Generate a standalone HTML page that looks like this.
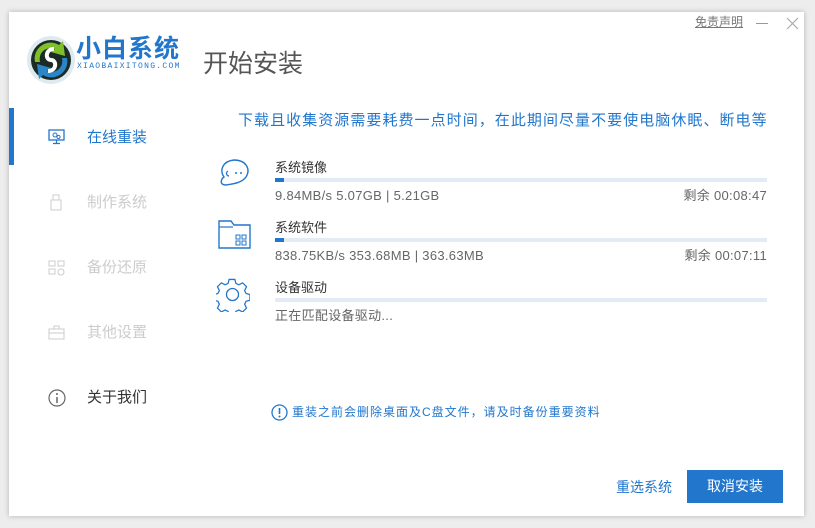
<!DOCTYPE html>
<html><head><meta charset="utf-8"><style>
body{margin:0;width:815px;height:528px;background:#ededed;position:relative;overflow:hidden;font-family:"Liberation Sans","Noto Sans CJK SC",sans-serif;}
.win{position:absolute;left:9px;top:12px;width:795px;height:504px;background:#fff;box-shadow:0 0 5px rgba(0,0,0,.25);}
.a{position:absolute;white-space:nowrap;line-height:1.2;}
.nav{position:absolute;left:78px;font-size:15px;color:#ccc;line-height:20px;}
.bar{position:absolute;left:266px;width:492px;height:4px;background:#e3ebf6;}
.bar i{position:absolute;left:0;top:0;height:4px;width:9px;background:#2277cc;}
.t{font-size:13px;color:#333;line-height:16px;}
.s{font-size:13px;color:#666;line-height:16px;letter-spacing:0.3px;}
</style></head><body>
<div class="win">
<svg class="a" style="left:16px;top:20px" width="52" height="56" viewBox="0 0 52 56">
<circle cx="26" cy="28" r="24" fill="#dfeaf0"/>
<circle cx="26" cy="28" r="20" fill="#1d2b26"/>
<path d="M10 30 A16 16 0 0 1 34 13 L38 9 L40 24 L26 20 L30 17 A11 11 0 0 0 15 30Z" fill="#7fbf2a"/>
<path d="M42 26 A16 16 0 0 1 18 43 L14 47 L12 32 L26 36 L22 39 A11 11 0 0 0 37 26Z" fill="#2a86c8"/>
<path d="M29 17 C20 17 20 28 26 28 C32 28 32 39 23 39" stroke="#fff" stroke-width="4" fill="none"/>
</svg>
<div class="a" style="left:67px;top:22px;font-size:25px;font-weight:bold;color:#2277cc;letter-spacing:1px">小白系统</div>
<div class="a" style="left:68px;top:50px;font-size:8px;color:#2277cc;letter-spacing:1.3px;font-family:'Liberation Mono',monospace">XIAOBAIXITONG.COM</div>
<div class="a" style="left:194px;top:37px;font-size:25px;color:#555">开始安装</div>
<div class="a" style="left:686px;top:3px;font-size:12px;color:#777;text-decoration:underline">免责声明</div>
<div class="a" style="left:747px;top:11px;width:12px;height:1px;background:#999"></div>
<svg class="a" style="left:777px;top:5px" width="13" height="13"><path d="M1 1L12 12M12 1L1 12" stroke="#aaa" stroke-width="1.2"/></svg>

<div class="a" style="left:0;top:96px;width:5px;height:57px;background:#2277cc"></div>
<svg class="a" style="left:39px;top:117px" width="18" height="16"><rect x="1" y="1" width="15" height="10" fill="none" stroke="#2277cc" stroke-width="1.3"/><circle cx="7" cy="6" r="2" fill="none" stroke="#2277cc"/><circle cx="10.5" cy="8" r="1.6" fill="none" stroke="#2277cc"/><path d="M8.5 11v3M5 14.5h7" stroke="#2277cc" stroke-width="1.2"/></svg>
<div class="nav" style="top:116px;color:#2277cc">在线重装</div>
<svg class="a" style="left:41px;top:182px" width="14" height="18"><rect x="3" y="1" width="6" height="5" fill="none" stroke="#ccc"/><rect x="1" y="6" width="10" height="10" fill="none" stroke="#ccc"/></svg>
<div class="nav" style="top:181px">制作系统</div>
<svg class="a" style="left:39px;top:247px" width="18" height="18"><rect x="1" y="2" width="6" height="5" fill="none" stroke="#ccc"/><rect x="10" y="2" width="6" height="5" fill="none" stroke="#ccc"/><rect x="1" y="10" width="6" height="5" fill="none" stroke="#ccc"/><circle cx="13" cy="13" r="3" fill="none" stroke="#ccc"/></svg>
<div class="nav" style="top:246px">备份还原</div>
<svg class="a" style="left:39px;top:313px" width="18" height="16"><rect x="1" y="4" width="15" height="10" fill="none" stroke="#ccc"/><rect x="6" y="1" width="5" height="3" fill="none" stroke="#ccc"/><path d="M1 8h15" stroke="#ccc"/></svg>
<div class="nav" style="top:311px">其他设置</div>
<svg class="a" style="left:39px;top:377px" width="18" height="18"><circle cx="9" cy="9" r="8" fill="none" stroke="#666" stroke-width="1.2"/><circle cx="9" cy="5" r="1" fill="#666"/><path d="M9 8v6" stroke="#666" stroke-width="1.5"/></svg>
<div class="nav" style="top:376px;color:#333">关于我们</div>

<div class="a" style="left:229px;top:100px;font-size:15px;color:#2277cc;letter-spacing:1.05px">下载且收集资源需要耗费一点时间，在此期间尽量不要使电脑休眠、断电等</div>

<svg class="a" style="left:207px;top:145px" width="38" height="34"><path d="M10 28 C3 28 5 22 8 20 C3 13 7 4 18 3 C30 3 35 12 30 20 C26 26 16 27 10 28Z" fill="none" stroke="#2277cc" stroke-width="1.4"/><path d="M12 14 C9 16 11 19 13 19" fill="none" stroke="#2277cc" stroke-width="1.2"/><circle cx="20" cy="16" r="1" fill="#2277cc"/><circle cx="25" cy="16" r="1" fill="#2277cc"/></svg>
<div class="a t" style="left:266px;top:148px">系统镜像</div>
<div class="bar" style="top:166px"><i></i></div>
<div class="a s" style="left:266px;top:176px">9.84MB/s 5.07GB | 5.21GB</div>
<div class="a s" style="right:37px;top:176px">剩余 00:08:47</div>

<svg class="a" style="left:208px;top:206px" width="36" height="32"><path d="M2 3h12l3 4h16v23H2Z" fill="none" stroke="#2277cc" stroke-width="1.4"/><path d="M2 9h14" stroke="#2277cc" stroke-width="1.2"/><g fill="none" stroke="#2277cc"><rect x="19" y="17" width="4" height="4"/><rect x="25" y="17" width="4" height="4"/><rect x="19" y="23" width="4" height="4"/><rect x="25" y="23" width="4" height="4"/></g></svg>
<div class="a t" style="left:266px;top:208px">系统软件</div>
<div class="bar" style="top:226px"><i></i></div>
<div class="a s" style="left:266px;top:236px">838.75KB/s 353.68MB | 363.63MB</div>
<div class="a s" style="right:37px;top:236px">剩余 00:07:11</div>

<svg class="a" style="left:207px;top:266px" width="34" height="34" viewBox="0 0 34 34"><path d="M14 2h6l1 4 3 1.5 4-2 4 4-2 4 1.5 3 4 1v6l-4 1-1.5 3 2 4-4 4-4-2-3 1.5-1 4h-6l-1-4-3-1.5-4 2-4-4 2-4-1.5-3-4-1v-6l4-1 1.5-3-2-4 4-4 4 2 3-1.5Z" transform="translate(-0.5 -0.5) scale(0.97)" fill="none" stroke="#2277cc" stroke-width="1.3"/><circle cx="16.5" cy="16.5" r="6" fill="none" stroke="#2277cc" stroke-width="1.3"/></svg>
<div class="a t" style="left:266px;top:268px">设备驱动</div>
<div class="bar" style="top:286px"></div>
<div class="a s" style="left:266px;top:296px">正在匹配设备驱动...</div>

<svg class="a" style="left:262px;top:392px" width="17" height="17"><circle cx="8.5" cy="8.5" r="7.5" fill="none" stroke="#2277cc" stroke-width="1.3"/><path d="M8.5 4v6" stroke="#2277cc" stroke-width="1.6"/><circle cx="8.5" cy="12.5" r="1" fill="#2277cc"/></svg>
<div class="a" style="left:283px;top:393px;font-size:12px;color:#2277cc;letter-spacing:1px">重装之前会删除桌面及C盘文件，请及时备份重要资料</div>

<div class="a" style="left:607px;top:467px;font-size:14px;color:#2277cc">重选系统</div>
<div class="a" style="left:678px;top:458px;width:96px;height:33px;background:#2277cc;color:#fff;font-size:14px;line-height:33px;text-align:center">取消安装</div>
</div>
</body></html>
